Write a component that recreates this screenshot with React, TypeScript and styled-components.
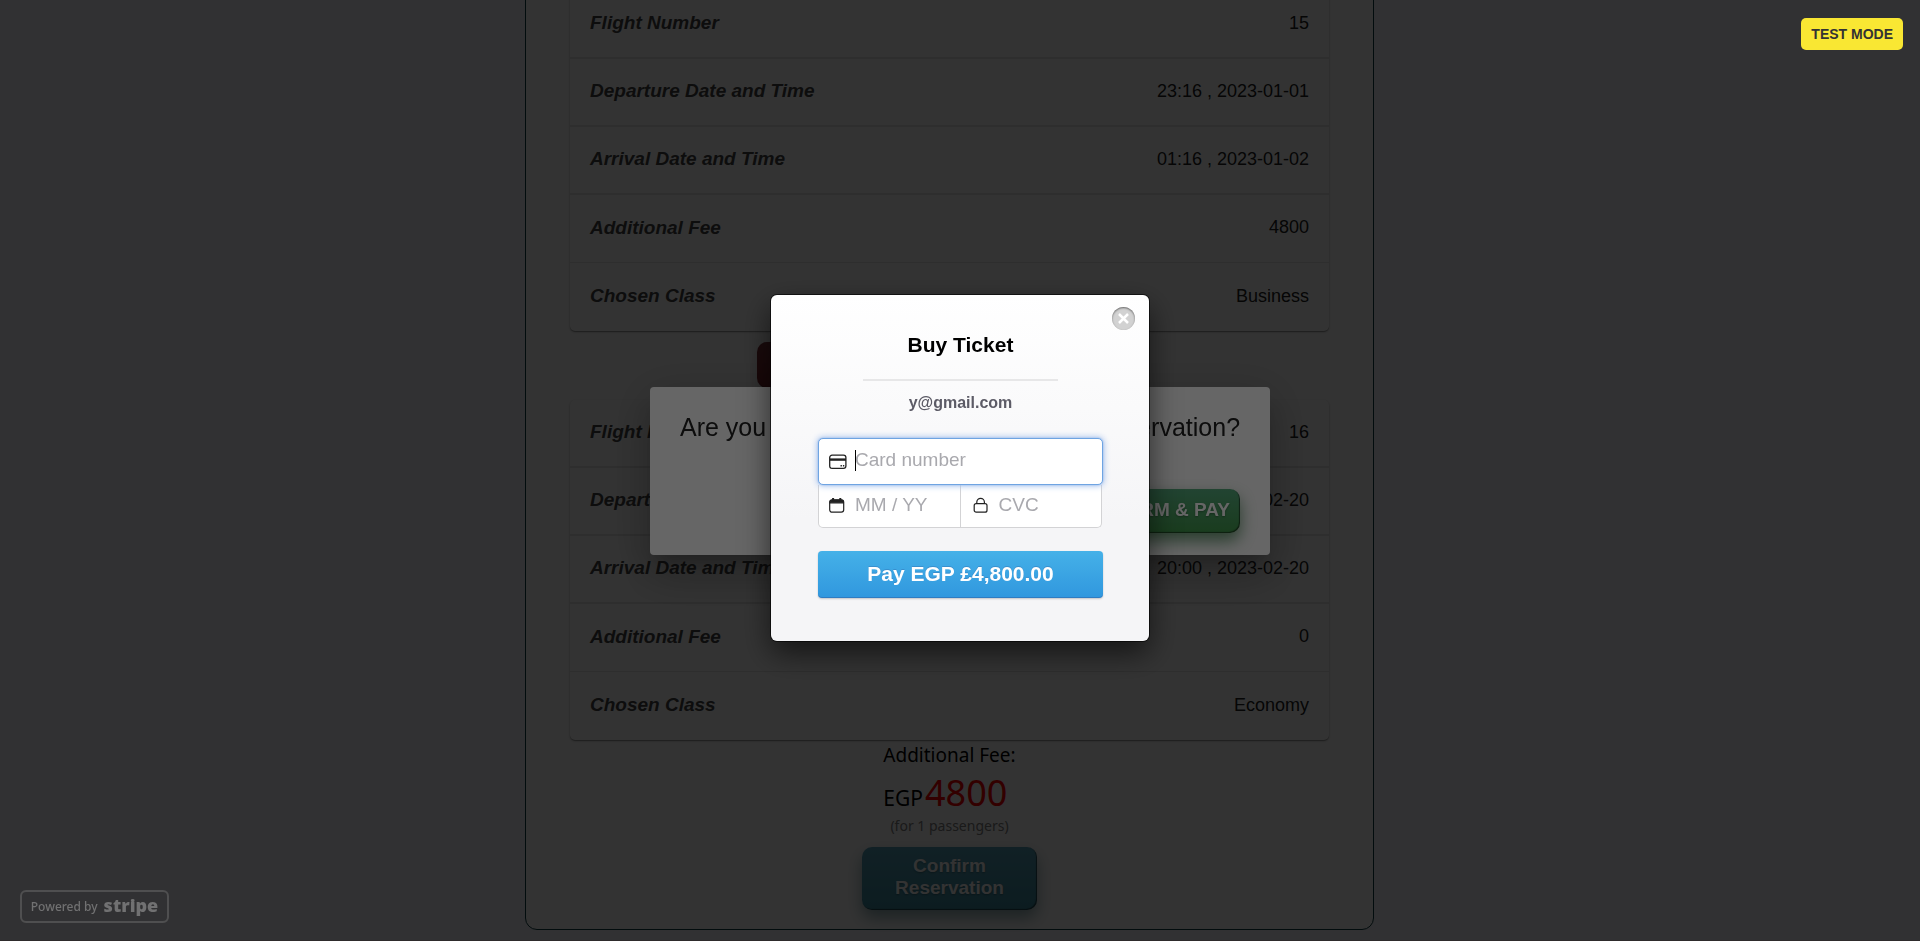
import React from 'react';
import styled, { createGlobalStyle, css } from 'styled-components';

const GlobalStyle = createGlobalStyle`
  * { box-sizing: border-box; }
  body {
    margin: 0;
    background: #f5f5ff;
    font-family: "Liberation Sans", Arial, sans-serif;
    color: #000;
  }
  button, input { font-family: inherit; }
`;

/* Reservation page */

const Page = styled.main`
  height: 100vh;
  overflow: hidden;
  display: flex;
  flex-direction: column;
  justify-content: flex-end;
  align-items: center;
  padding: 0 21px 10px 0;
  border-bottom: 1px solid #e6d5dc;
`;

const Panel = styled.section`
  flex-shrink: 0;
  width: 849px;
  max-width: 100%;
  display: flex;
  flex-direction: column;
  align-items: center;
  padding: 32px 44px 19px;
  background: #fff;
  border: 1px solid #0c3c41;
  border-radius: 12px;
`;

const FlightCard = styled.div`
  width: 100%;
  border-radius: 5px;
  overflow: hidden;
  box-shadow: 0 1px 1px rgba(0, 0, 0, 0.3), 0 1px 3px rgba(0, 0, 0, 0.2);
`;

const FlightTable = styled.table`
  width: 100%;
  border-collapse: separate;
  border-spacing: 0;
`;

const cell = css`
  height: 68px;
  padding: 0 20px 2px;
  border-bottom: 2px solid #e4e4e4;
  tr:nth-child(n + 4) & {
    border-bottom-width: 1px;
  }
  tr:last-child & {
    border-bottom: 0;
  }
`;

const RowLabel = styled.th`
  ${cell}
  text-align: left;
  font-size: 19px;
  font-style: italic;
  font-weight: 700;
  color: #444;
`;

const RowValue = styled.td`
  ${cell}
  text-align: right;
  font-size: 18px;
  color: #212121;
`;

const GlossyButton = styled.button<{ $from: string; $to: string; $glow: string }>`
  border: 0;
  border-radius: 10px;
  color: #fff;
  font-size: 19px;
  font-weight: 700;
  line-height: 22px;
  text-shadow: 0 1px 2px rgba(0, 0, 0, 0.3);
  background: linear-gradient(${(p) => p.$from}, ${(p) => p.$to});
  box-shadow: inset -1px -1px 1px rgba(0, 0, 0, 0.5), 0 8px 16px ${(p) => p.$glow};
`;

const RemoveButton = styled(GlossyButton)`
  width: 385px;
  height: 46px;
  margin: 11px 0 12px;
`;

const ConfirmButton = styled(GlossyButton)`
  width: 175px;
  height: 63px;
  padding: 0 24px 4px;
`;

const Summary = styled.div`
  display: flex;
  flex-direction: column;
  align-items: center;
  font-family: "Noto Sans", "Open Sans", sans-serif;
`;

const SummaryTitle = styled.div`
  margin-bottom: 3px;
  font-size: 19px;
  line-height: 30px;
`;

const SummaryPrice = styled.div`
  align-self: flex-start;
  font-size: 21px;
  line-height: 40px;
`;

const Amount = styled.span`
  margin-left: 2px;
  font-size: 36px;
  color: #f00;
`;

const SummaryNote = styled.div`
  font-size: 14px;
  line-height: 16px;
  margin-bottom: 13px;
  color: #808080;
`;

/* Confirmation dialog */

const Backdrop = styled.div<{ $shade: number }>`
  position: fixed;
  inset: 0;
  display: flex;
  align-items: center;
  justify-content: center;
  background: rgba(0, 0, 0, ${(p) => p.$shade});
`;

const ConfirmDialog = styled.section`
  width: 620px;
  height: 168px;
  display: flex;
  flex-direction: column;
  justify-content: space-between;
  align-items: flex-end;
  padding: 24px 30px 22px;
  background: #fff;
  border-radius: 4px;
  box-shadow: 0 11px 15px -7px rgba(0, 0, 0, 0.2), 0 24px 38px 3px rgba(0, 0, 0, 0.14),
    0 9px 46px 8px rgba(0, 0, 0, 0.12);
`;

const DialogTitle = styled.h2`
  width: 100%;
  margin: 0;
  font-size: 25px;
  font-weight: 400;
  line-height: 32px;
  white-space: nowrap;
  color: #212121;
`;

const DialogAction = styled(GlossyButton)`
  height: 44px;
  padding: 0 10px 2px;
`;

/* Checkout */

const Checkout = styled.form`
  position: relative;
  width: 378px;
  margin-bottom: 5px;
  padding: 38px 46px 43px 47px;
  border-radius: 6px;
  background: linear-gradient(#fff, #f5f5f7 65%);
  box-shadow: 0 0 0 1px rgba(0, 0, 0, 0.6), 0 12px 30px rgba(0, 0, 0, 0.6);
`;

const CloseButton = styled.button`
  position: absolute;
  top: 12px;
  right: 14px;
  width: 23px;
  height: 23px;
  display: flex;
  align-items: center;
  justify-content: center;
  padding: 0;
  border: 0;
  border-radius: 50%;
  background: #d2d2d2;
  box-shadow: inset 0 1px 2px rgba(0, 0, 0, 0.5);
`;

const CheckoutTitle = styled.h1`
  margin: 0 45px 10px;
  padding-bottom: 22px;
  border-bottom: 2px solid #e7e7e8;
  font-size: 21px;
  line-height: 24px;
  text-align: center;
`;

const Email = styled.p`
  margin: 0 0 23px;
  font-size: 16px;
  font-weight: 700;
  line-height: 24px;
  text-align: center;
  color: #5c5b66;
`;

const Fields = styled.div`
  display: grid;
  grid-template-columns: repeat(2, minmax(0, 1fr));
`;

const Field = styled.label<{ $side?: 'left' | 'right' | 'full' }>`
  position: relative;
  display: flex;
  align-items: center;
  height: 43px;
  padding: 0 10px;
  background: #fff;
  border: 1px solid #d3d3d5;
  border-top: 0;
  ${(p) =>
    p.$side === 'full' &&
    css`
      grid-column: 1 / -1;
      z-index: 1;
      height: 47px;
      border: 1px solid #6fa4e2;
      border-radius: 5px;
      box-shadow: 0 0 2px #8fb5ea, 0 0 6px 1px #a9c4ee;
    `}
  ${(p) => p.$side === 'left' && css`border-radius: 0 0 0 5px;`}
  ${(p) =>
    p.$side === 'right' &&
    css`
      border-left: 0;
      border-radius: 0 0 5px 0;
      margin-right: 1px;
      padding-left: 12px;
    `}
`;

const FieldIcon = styled.svg`
  flex: none;
  width: 18px;
  height: 18px;
  margin-right: 8px;
  fill: none;
  stroke: #222;
`;

const FieldInput = styled.input`
  flex: 1;
  min-width: 0;
  padding: 0 0 3px;
  border: 0;
  outline: 0;
  background: transparent;
  font-size: 19px;
  line-height: 24px;
  caret-color: transparent;
  &::placeholder {
    color: #a9a9ae;
    opacity: 1;
  }
`;

const Caret = styled.span`
  position: absolute;
  left: 36px;
  top: 11px;
  width: 1px;
  height: 21px;
  background: #000;
`;

const PayButton = styled.button`
  width: 100%;
  height: 47px;
  margin-top: 23px;
  padding: 0 0 2px;
  border: 0;
  border-radius: 4px;
  color: #fff;
  font-size: 21px;
  font-weight: 700;
  text-shadow: 0 -1px 0 rgba(46, 86, 153, 0.3);
  background: linear-gradient(#45b1e8, #3097de);
  box-shadow: 0 1px 2px rgba(0, 0, 0, 0.2), inset 0 -1px 0 rgba(46, 86, 153, 0.4);
`;

const TestMode = styled.a`
  position: absolute;
  top: 18px;
  right: 17px;
  padding: 0 10px;
  border-radius: 5px;
  background: #f9e733;
  color: #333;
  font-size: 14px;
  font-weight: 700;
  line-height: 32px;
  text-decoration: none;
`;

const PoweredBy = styled.a`
  position: absolute;
  left: 20px;
  bottom: 18px;
  width: 149px;
  height: 33px;
  display: flex;
  align-items: center;
  justify-content: center;
  gap: 6px;
  border: 2px solid #4f4f50;
  border-radius: 6px;
  color: #717172;
  font: 500 12px "Noto Sans", sans-serif;
  text-decoration: none;
`;

const StripeName = styled.span`
  margin-top: -3px;
  font: 800 18px/24px "Open Sans", sans-serif;
`;

type Row = [string, string];

const outbound: Row[] = [
  ['Flight Number', '15'],
  ['Departure Date and Time', '23:16 , 2023-01-01'],
  ['Arrival Date and Time', '01:16 , 2023-01-02'],
  ['Additional Fee', '4800'],
  ['Chosen Class', 'Business'],
];

const inbound: Row[] = [
  ['Flight Number', '16'],
  ['Departure Date and Time', '18:00 , 2023-02-20'],
  ['Arrival Date and Time', '20:00 , 2023-02-20'],
  ['Additional Fee', '0'],
  ['Chosen Class', 'Economy'],
];

function Flight({ rows }: { rows: Row[] }) {
  return (
    <FlightCard>
      <FlightTable>
        <tbody>
          {rows.map(([label, value]) => (
            <tr key={label}>
              <RowLabel scope="row">{label}</RowLabel>
              <RowValue>{value}</RowValue>
            </tr>
          ))}
        </tbody>
      </FlightTable>
    </FlightCard>
  );
}

export default function App() {
  return (
    <>
      <GlobalStyle />
      <Page>
        <Panel>
          <Flight rows={outbound} />
          <RemoveButton type="button" aria-label="Change flight" $from="#7d333a" $to="#7a2028" $glow="rgba(122, 32, 40, 0.1)" />
          <Flight rows={inbound} />
          <Summary>
            <SummaryTitle>Additional Fee:</SummaryTitle>
            <SummaryPrice>
              EGP<Amount>4800</Amount>
            </SummaryPrice>
            <SummaryNote>(for 1 passengers)</SummaryNote>
          </Summary>
          <ConfirmButton type="button" $from="#55a0b9" $to="#3c8ca0" $glow="rgba(30, 90, 100, 0.5)">
            Confirm Reservation
          </ConfirmButton>
        </Panel>
      </Page>

      <Backdrop $shade={0.5}>
        <ConfirmDialog role="dialog" aria-labelledby="confirm-title">
          <DialogTitle id="confirm-title">Are you sure you want to update your reservation?</DialogTitle>
          <DialogAction type="button" $from="#55aa7d" $to="#41964b" $glow="rgba(40, 110, 55, 0.7)">
            CONFIRM &amp; PAY
          </DialogAction>
        </ConfirmDialog>
      </Backdrop>

      <Backdrop $shade={0.6}>
        <Checkout aria-label="Checkout" onSubmit={(e) => e.preventDefault()}>
          <CloseButton type="button" aria-label="Close">
            <svg width="11" height="11" viewBox="0 0 11 11" stroke="#fff" strokeWidth="2.5">
              <path d="M1 1l9 9M10 1l-9 9" />
            </svg>
          </CloseButton>
          <CheckoutTitle>Buy Ticket</CheckoutTitle>
          <Email>y@gmail.com</Email>
          <Fields>
            <Field $side="full">
              <FieldIcon viewBox="0 0 18 18" strokeWidth="1.3">
                <rect x="0.7" y="2.2" width="16.2" height="13.2" rx="2.4" />
                <path d="M1 6.6h16" strokeWidth="2.4" />
                <path d="M11.5 12.8h1.4M13.9 12.8h1.4" strokeWidth="1.4" />
              </FieldIcon>
              <FieldInput placeholder="Card number" aria-label="Card number" />
              <Caret />
            </Field>
            <Field $side="left">
              <FieldIcon viewBox="0 0 18 18" strokeWidth="1.2">
                <rect x="0.7" y="2.8" width="14" height="12.4" rx="2.4" />
                <path d="M1 5.8V5a2 2 0 0 1 2-2h9.4a2 2 0 0 1 2 2v0.8z" fill="#222" />
                <path d="M4.1 1v3M11.3 1v3" strokeWidth="2" />
              </FieldIcon>
              <FieldInput placeholder="MM / YY" aria-label="Expiry date" />
            </Field>
            <Field $side="right">
              <FieldIcon viewBox="0 0 18 18" strokeWidth="1.2">
                <rect x="1.2" y="6.6" width="12.8" height="8.6" rx="2" />
                <path d="M3.8 6.6V5.1a3.8 3.8 0 0 1 7.6 0V6.6" />
              </FieldIcon>
              <FieldInput placeholder="CVC" aria-label="CVC" />
            </Field>
          </Fields>
          <PayButton type="submit">Pay EGP £4,800.00</PayButton>
        </Checkout>
        <TestMode href="#test-mode">TEST MODE</TestMode>
        <PoweredBy href="#stripe">
          Powered by <StripeName>stripe</StripeName>
        </PoweredBy>
      </Backdrop>
    </>
  );
}
